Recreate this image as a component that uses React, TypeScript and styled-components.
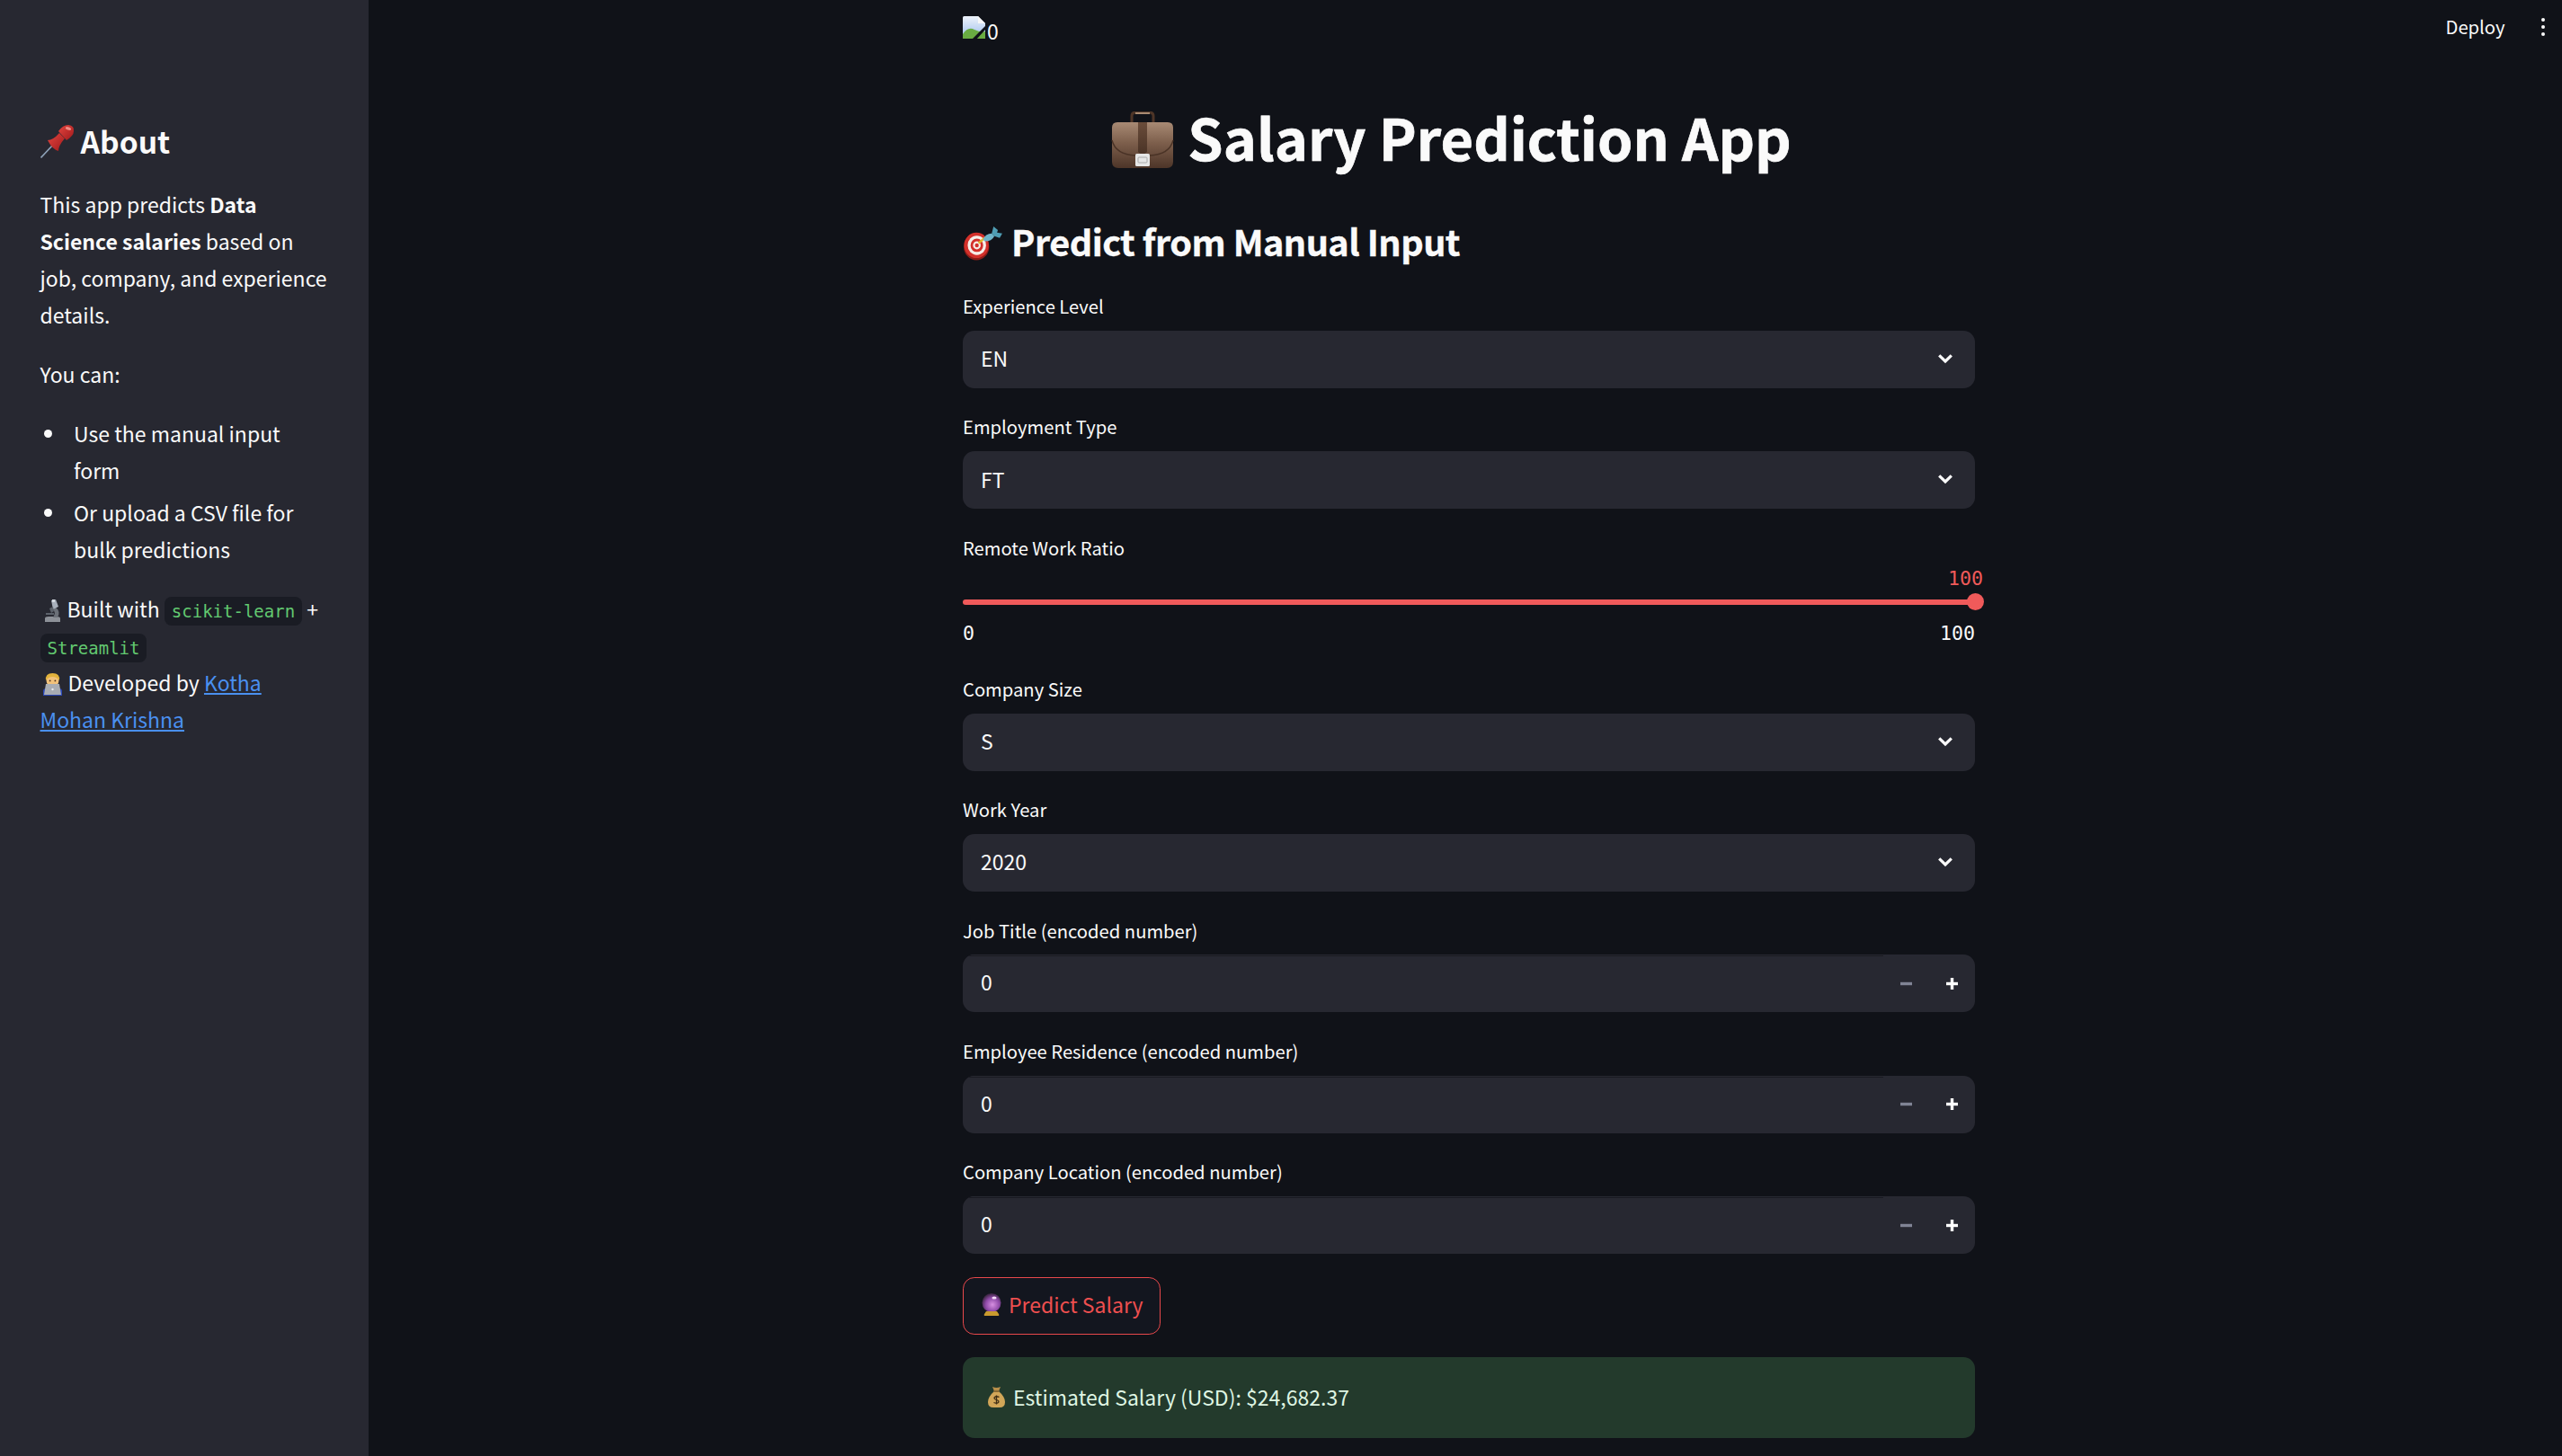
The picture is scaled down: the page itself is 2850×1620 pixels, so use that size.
import styled, { createGlobalStyle } from "styled-components";

const GlobalStyle = createGlobalStyle`
  html, body {
    margin: 0;
    padding: 0;
    background: #101218;
  }
  * {
    box-sizing: border-box;
  }
`;

const SANS = `"Noto Sans CJK SC", "Noto Sans", sans-serif`;
const MONO = `"DejaVu Sans Mono", "Liberation Mono", monospace`;

const Page = styled.div`
  display: flex;
  width: 2850px;
  height: 1620px;
  overflow: hidden;
  position: relative;
  font-family: ${SANS};
  font-size: 23px;
  line-height: 41px;
  color: #fafafa;
  background: #101218;
`;

const Sidebar = styled.aside`
  width: 410px;
  height: 100%;
  flex: none;
  padding: 130px 44px 0 44.5px;
  background: #272831;
`;

const SideTitle = styled.h2`
  display: flex;
  align-items: center;
  gap: 7px;
  margin: 0 0 23px;
  font-size: 33.6px;
  line-height: 54px;
  font-weight: 700;
`;

const Para = styled.p`
  margin: 0 0 25px;
`;

const Bullets = styled.ul`
  margin: 0 0 25px;
  padding: 0 0 0 37.5px;
  list-style: none;
`;

const Bullet = styled.li`
  position: relative;
  margin-bottom: 6px;
  &:last-child {
    margin-bottom: 0;
  }
  &::before {
    content: "";
    position: absolute;
    left: -33px;
    top: 16px;
    width: 9px;
    height: 9px;
    border-radius: 50%;
    background: #fafafa;
  }
`;

const Code = styled.code`
  font-family: ${MONO};
  font-size: 19px;
  line-height: 20px;
  padding: 5px 8px;
  border-radius: 8px;
  background: #1a1c24;
  color: #62c970;
`;

const InlineIcon = styled.span`
  svg {
    vertical-align: -5px;
    margin: 0 7px 0 3px;
  }
`;

const DevLink = styled.a`
  color: #4a90f0;
  text-decoration: underline;
`;

const Main = styled.main`
  flex: 1;
  padding-left: 661px;
`;

const Column = styled.div`
  width: 1126px;
`;

const BrokenImage = styled.div`
  display: flex;
  align-items: flex-end;
  gap: 1px;
  height: 106px;
  padding-bottom: 62px;
  line-height: 20px;
`;

const AppTitle = styled.h1`
  display: flex;
  align-items: center;
  justify-content: center;
  gap: 15px;
  height: 98px;
  margin: 0 0 34px;
  padding-right: 39px;
  font-size: 63px;
  line-height: 98px;
  font-weight: 700;
  -webkit-text-stroke: 0.7px #fafafa;
`;

const TitleText = styled.span`
  margin-bottom: 6px;
`;

const Section = styled.h2`
  display: flex;
  align-items: center;
  gap: 9px;
  height: 64px;
  margin: 0 0 21px;
  font-size: 39.6px;
  line-height: 64px;
  font-weight: 700;
  letter-spacing: -0.5px;
  white-space: nowrap;
  -webkit-text-stroke: 0.4px #fafafa;
`;

const SectionText = styled.span`
  margin-bottom: 4px;
`;

const Field = styled.div`
  margin-bottom: 25.6px;
`;

const Label = styled.label`
  display: block;
  height: 44.8px;
  font-size: 20.2px;
  line-height: 35px;
`;

const Select = styled.div`
  display: flex;
  align-items: center;
  justify-content: space-between;
  height: 64px;
  padding: 0 25px 2px 20px;
  border-radius: 12.8px;
  background: #272831;
`;

const NumberInput = styled.div`
  display: flex;
  align-items: center;
  height: 64px;
  border-radius: 12.8px;
  background: #272831;
`;

const NumberValue = styled.span`
  flex: 1;
  align-self: stretch;
  padding-left: 20px;
  line-height: 61px;
  border-radius: 12.8px 0 0 12.8px;
  background: linear-gradient(#272831 1px, #191a21 1px, #191a21 2px, transparent 2px);
`;

const StepButton = styled.span`
  display: flex;
  align-items: center;
  justify-content: center;
  width: 51px;
`;

const SliderField = styled.div`
  height: 131.4px;
  margin-bottom: 25.6px;
`;

const SliderValue = styled.div`
  height: 21px;
  margin: -4px -9px 0 0;
  text-align: right;
  font-family: ${MONO};
  font-size: 21.6px;
  line-height: 21px;
  color: #f05a5a;
`;

const Track = styled.div`
  position: relative;
  height: 6.4px;
  margin-top: 13px;
  border-radius: 4px;
  background: #f05a5a;
`;

const Thumb = styled.span`
  position: absolute;
  right: -10px;
  top: -6.4px;
  width: 19.2px;
  height: 19.2px;
  border-radius: 50%;
  background: #f05a5a;
`;

const Ticks = styled.div`
  display: flex;
  justify-content: space-between;
  margin-top: 20px;
  font-family: ${MONO};
  font-size: 21.6px;
  line-height: 24px;
`;

const PredictButton = styled.button`
  display: flex;
  align-items: center;
  gap: 8px;
  height: 64px;
  width: 220px;
  padding: 0 0 3px 20px;
  border: 1.6px solid #e8484b;
  border-radius: 12.8px;
  background: #13161f;
  color: #ee4f4f;
  font-family: ${SANS};
  font-size: 23px;
  white-space: nowrap;
`;

const Alert = styled.div`
  display: flex;
  align-items: center;
  gap: 9px;
  height: 90px;
  margin-top: 25px;
  padding-left: 28px;
  border-radius: 12.8px;
  background: #233a2c;
  color: #dff5e3;
`;

const TopBar = styled.div`
  position: absolute;
  top: 12px;
  right: 19px;
  display: flex;
  align-items: center;
  gap: 40px;
  font-size: 20.2px;
  line-height: 36px;
`;

const Kebab = styled.span`
  display: flex;
  flex-direction: column;
  gap: 3.5px;
  i {
    display: block;
    width: 4.5px;
    height: 4.5px;
    border-radius: 50%;
    background: #fafafa;
  }
`;

const Chevron = () => (
  <svg width="16" height="12" viewBox="0 0 16 12" fill="none" stroke="#fafafa" strokeWidth="3.2">
    <path d="M1.2 2.4L8 9l6.8-6.6" />
  </svg>
);

const Minus = () => (
  <svg width="13" height="13" viewBox="0 0 13 13">
    <rect y="4.8" width="13" height="3.4" fill="#808495" />
  </svg>
);

const Plus = () => (
  <svg width="13" height="13" viewBox="0 0 13 13" fill="#ffffff">
    <rect y="4.8" width="13" height="3.4" />
    <rect x="4.8" width="3.4" height="13" />
  </svg>
);

const BrokenImageIcon = () => (
  <svg width="26" height="26" viewBox="0 0 26 26">
    <defs>
      <linearGradient id="sky" x1="0" y1="0" x2="0" y2="1">
        <stop offset="0" stopColor="#eef3fb" />
        <stop offset="0.7" stopColor="#b4cdf0" />
      </linearGradient>
    </defs>
    <path d="M0 1.5Q0 0 1.5 0H17L25 8V25H0Z" fill="url(#sky)" />
    <path d="M17 0L25 8H17Z" fill="#f7f7f7" />
    <path d="M0 25V20Q6 11 13 15Q19 18 25 17V25Z" fill="#69ac42" />
    <path d="M10 26L26 10V14L15 26Z" fill="#101218" />
  </svg>
);

const PinIcon = () => (
  <svg width="38" height="37" viewBox="0 0 38 37">
    <defs>
      <linearGradient id="pinRed" x1="0" y1="0" x2="1" y2="1">
        <stop offset="0" stopColor="#e4453f" />
        <stop offset="1" stopColor="#a01a1c" />
      </linearGradient>
    </defs>
    <path d="M0.5 36.5L15 21" stroke="#8ea2b8" strokeWidth="1.6" />
    <path d="M8 17Q14 17 21 9L27 15Q20 23 20 29Q13 27 8 17Z" fill="url(#pinRed)" />
    <path d="M20 7Q25 0 31 0Q38 1 37 7Q37 12 29 17Z" fill="url(#pinRed)" />
    <ellipse cx="31" cy="4" rx="3.2" ry="1.6" fill="#f08c84" transform="rotate(20 31 4)" />
  </svg>
);

const BriefcaseIcon = () => (
  <svg width="70" height="63" viewBox="7 10 70 63">
    <defs>
      <linearGradient id="caseBody" x1="0" y1="0" x2="0" y2="1">
        <stop offset="0" stopColor="#a88a74" />
        <stop offset="0.45" stopColor="#7d5f4c" />
        <stop offset="1" stopColor="#4d3528" />
      </linearGradient>
      <linearGradient id="caseStrap" x1="0" y1="0" x2="0" y2="1">
        <stop offset="0" stopColor="#6a4c3a" />
        <stop offset="1" stopColor="#4a3326" />
      </linearGradient>
    </defs>
    <path d="M30 22V15Q30 11 35 11H49Q54 11 54 15V22" fill="none" stroke="#4e3527" strokeWidth="3" />
    <path d="M34 12H50" stroke="#a98a72" strokeWidth="2" />
    <path d="M8 28Q8 22 14 22H70Q76 22 76 28V66Q76 73 69 73H15Q8 73 8 66Z" fill="url(#caseBody)" />
    <path d="M8 42Q12 58 34 59H50Q72 58 76 42" fill="none" stroke="#4a3326" strokeWidth="1.4" />
    <path d="M37 22H47V55Q42 60 37 55Z" fill="url(#caseStrap)" />
    <rect x="34" y="57" width="16" height="14" rx="1.5" fill="#e6e6e6" />
    <rect x="37" y="61" width="10" height="6" rx="1" fill="none" stroke="#aaaaaa" strokeWidth="1" />
  </svg>
);

const TargetIcon = () => (
  <svg width="45" height="39" viewBox="5 6 46 40">
    <ellipse cx="20.5" cy="30" rx="14.5" ry="15.5" fill="#8e1d18" />
    <ellipse cx="20.5" cy="28.5" rx="14" ry="14.5" fill="#d3302a" />
    <ellipse cx="21" cy="28.5" rx="10.5" ry="11" fill="#f7eee8" />
    <ellipse cx="21" cy="28.5" rx="7.2" ry="7.6" fill="#d3302a" />
    <ellipse cx="21" cy="28.5" rx="4.4" ry="4.6" fill="#f7eee8" />
    <ellipse cx="21" cy="28.5" rx="2.2" ry="2.3" fill="#d3302a" />
    <path d="M23 26L30 20" stroke="#e0b92c" strokeWidth="2.4" />
    <path d="M28 22Q31 15 38 15L41 18Q38 24 30 24Z" fill="#6fb4c8" />
    <path d="M38 15L40 7L45 11L44 14L50 15L47 20L41 18Z" fill="#4f9db3" />
  </svg>
);

const MicroscopeIcon = () => (
  <svg width="20" height="25" viewBox="0 0 20 25">
    <path d="M2 21Q2 19 6 19H15Q19 19 19 21V25H2Z" fill="#8d9198" />
    <path d="M13 8Q20 13 16 20H11Q15 14 10 10Z" fill="#6b7078" />
    <path d="M9 1L14 0L17 8L11 11Z" fill="#a8b0bc" />
    <path d="M7 10L11 8L12 13L9 15Z" fill="#5c626b" />
    <rect x="3" y="15" width="9" height="2" fill="#5c626b" />
    <rect x="10" y="0" width="3" height="3" fill="#d6dbe2" />
  </svg>
);

const TechnologistIcon = () => (
  <svg width="21" height="25" viewBox="0 0 21 25">
    <path d="M0 25V20Q0 17 3 17H18Q21 17 21 20V25Z" fill="#2c49b8" />
    <circle cx="10.5" cy="8" r="7" fill="#f2c27a" />
    <path d="M3 8Q2 0 10.5 0Q19 0 18 8Q15 4 10.5 4Q6 4 3 8Z" fill="#e2b23c" />
    <circle cx="7.6" cy="8.4" r="0.9" fill="#4a2e1b" />
    <circle cx="13.4" cy="8.4" r="0.9" fill="#4a2e1b" />
    <path d="M3 12H18L20 24H1Z" fill="#a9adb3" />
    <circle cx="10.5" cy="18" r="1.2" fill="#e8eaec" />
  </svg>
);

const CrystalBallIcon = () => (
  <svg width="22" height="25" viewBox="0 0 22 25">
    <defs>
      <radialGradient id="ball" cx="0.55" cy="0.6" r="0.6">
        <stop offset="0" stopColor="#d68fe0" />
        <stop offset="0.6" stopColor="#8f4aa8" />
        <stop offset="1" stopColor="#3a2540" />
      </radialGradient>
    </defs>
    <circle cx="11" cy="10.5" r="10.5" fill="url(#ball)" />
    <ellipse cx="14" cy="5" rx="2.6" ry="1.6" fill="#f3dcf7" />
    <path d="M5 20H17L19 23Q20 25 18 25H4Q2 25 3 23Z" fill="#c99a2e" />
  </svg>
);

const MoneyBagIcon = () => (
  <svg width="19" height="23" viewBox="0 0 19 23">
    <path d="M5 0Q9.5 2 14 0L12 5H7Z" fill="#b98f4a" />
    <path d="M7 5H12Q19 11 19 17Q19 23 13 23H6Q0 23 0 17Q0 11 7 5Z" fill="#d2a658" />
    <rect x="6.5" y="4" width="6" height="2" fill="#8a6a34" />
    <path d="M12.5 11.5Q9.5 10 7.5 11.5Q6 13.5 9.5 14.5Q13 15.5 11.5 17.5Q9.5 19 6.5 17.5M9.5 9.5V19.5" fill="none" stroke="#3d2c14" strokeWidth="1.3" />
  </svg>
);

const selects1 = [
  { label: "Experience Level", value: "EN" },
  { label: "Employment Type", value: "FT" },
];
const selects2 = [
  { label: "Company Size", value: "S" },
  { label: "Work Year", value: "2020" },
];
const numbers = ["Job Title (encoded number)", "Employee Residence (encoded number)", "Company Location (encoded number)"];

const App = () => (
  <Page>
    <GlobalStyle />
    <Sidebar>
      <SideTitle>
        <PinIcon />
        About
      </SideTitle>
      <Para>
        This app predicts <b>Data Science salaries</b> based on job, company, and experience details.
      </Para>
      <Para>You can:</Para>
      <Bullets>
        <Bullet>Use the manual input form</Bullet>
        <Bullet>Or upload a CSV file for bulk predictions</Bullet>
      </Bullets>
      <Para>
        <InlineIcon>
          <MicroscopeIcon />
        </InlineIcon>
        Built with <Code>scikit-learn</Code> + <Code>Streamlit</Code>
        <br />
        <InlineIcon>
          <TechnologistIcon />
        </InlineIcon>
        Developed by <DevLink>Kotha Mohan Krishna</DevLink>
      </Para>
    </Sidebar>
    <Main>
      <Column>
        <BrokenImage>
          <BrokenImageIcon />
          0
        </BrokenImage>
        <AppTitle>
          <BriefcaseIcon />
          <TitleText>Salary Prediction App</TitleText>
        </AppTitle>
        <Section>
          <TargetIcon />
          <SectionText>Predict from Manual Input</SectionText>
        </Section>
        {selects1.map((s) => (
          <Field key={s.label}>
            <Label>{s.label}</Label>
            <Select>
              {s.value}
              <Chevron />
            </Select>
          </Field>
        ))}
        <SliderField>
          <Label>Remote Work Ratio</Label>
          <SliderValue>100</SliderValue>
          <Track>
            <Thumb />
          </Track>
          <Ticks>
            <span>0</span>
            <span>100</span>
          </Ticks>
        </SliderField>
        {selects2.map((s) => (
          <Field key={s.label}>
            <Label>{s.label}</Label>
            <Select>
              {s.value}
              <Chevron />
            </Select>
          </Field>
        ))}
        {numbers.map((n) => (
          <Field key={n}>
            <Label>{n}</Label>
            <NumberInput>
              <NumberValue>0</NumberValue>
              <StepButton>
                <Minus />
              </StepButton>
              <StepButton>
                <Plus />
              </StepButton>
            </NumberInput>
          </Field>
        ))}
        <PredictButton>
          <CrystalBallIcon />
          Predict Salary
        </PredictButton>
        <Alert>
          <MoneyBagIcon />
          Estimated Salary (USD): $24,682.37
        </Alert>
      </Column>
    </Main>
    <TopBar>
      Deploy
      <Kebab>
        <i />
        <i />
        <i />
      </Kebab>
    </TopBar>
  </Page>
);

export default App;
